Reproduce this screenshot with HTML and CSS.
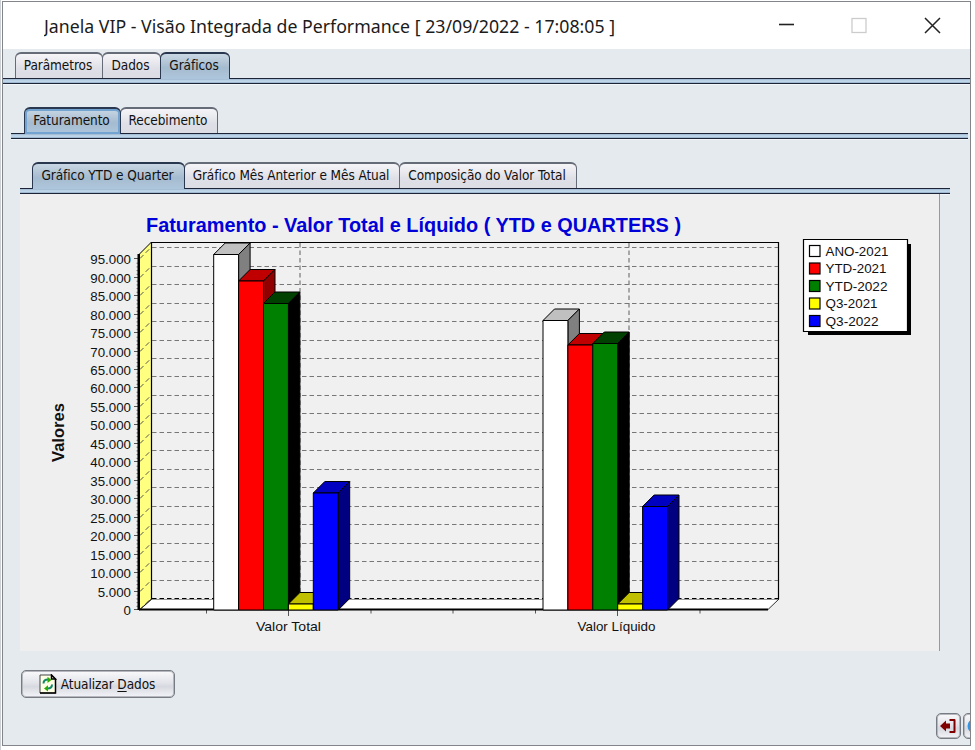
FILE: index.html
```html
<!DOCTYPE html>
<html lang="pt-BR">

<head>
    <meta charset="UTF-8">
    <meta name="viewport" content="width=device-width, initial-scale=1.0">
    <title>Janela VIP</title>
    <link rel="stylesheet" href="styles.css">
</head>

<body>
    <div class="window">
        <div class="titlebar">
            <svg class="title" width="590" height="45">
                <text x="0" y="30" textLength="571" lengthAdjust="spacingAndGlyphs">Janela VIP - Visão Integrada de Performance [ 23/09/2022 - 17:08:05 ]</text>
            </svg>
            <svg class="controls" width="170" height="45">
                <path d="M3 21.5h15" stroke="#222" stroke-width="1.6"/>
                <rect x="76" y="15.500" width="14" height="14" fill="none" stroke="#ccc" stroke-width="1.3"/>
                <path d="M149 15l15 15M164 15l-15 15" stroke="#222" stroke-width="1.5"/>
            </svg>
        </div>

        <div class="level level1">
            <div class="tabs">
                <div class="tab w88"><span>Parâmetros</span></div>
                <div class="tab w57"><span>Dados</span></div>
                <div class="tab w70 active"><span>Gráficos</span></div>
            </div>
            <div class="line"></div>
        </div>
        <div class="level level2">
            <div class="tabs">
                <div class="tab w97 active focus"><span>Faturamento</span></div>
                <div class="tab w98"><span>Recebimento</span></div>
            </div>
            <div class="line"></div>
        </div>
        <div class="level level3">
            <div class="tabs">
                <div class="tab w153 active"><span>Gráfico YTD e Quarter</span></div>
                <div class="tab w216"><span>Gráfico Mês Anterior e Mês Atual</span></div>
                <div class="tab w178"><span>Composição do Valor Total</span></div>
            </div>
            <div class="line"></div>
        </div>

        <div class="panel">
            <svg class="chart" width="919" height="457" viewBox="20 194 919 457">
                <text class="chart-title" x="146" y="231.500" textLength="535" lengthAdjust="spacingAndGlyphs">Faturamento - Valor Total e Líquido ( YTD e QUARTERS )</text>
                <text class="axis-title" transform="translate(64 462) rotate(-90)" textLength="59" lengthAdjust="spacingAndGlyphs">Valores</text>
                <!-- paredes -->
                <path d="M139.500 254L151.500 242V599L139.500 610Z" fill="#ffff80" stroke="#000"/>
                <path d="M140 609.500L152 599H779L768 609.500Z" fill="#fff" stroke="#000" stroke-width=".8"/>
                <path d="M151.500 599V242.500H778.500V599" fill="#f0f0f0" stroke="#000" stroke-width="1.2"/>
                <g id="grid"></g>
                <path d="M138.500 254V610" stroke="#000" stroke-width="2"/>
                <path d="M139 609.600H768" stroke="#000" stroke-width="2"/>
                <g id="bars"></g>
                <text x="256" y="631" textLength="65" lengthAdjust="spacingAndGlyphs">Valor Total</text>
                <text x="577.500" y="631" textLength="78" lengthAdjust="spacingAndGlyphs">Valor Líquido</text>
                <!-- legenda -->
                <path d="M808 244H911V335H808Z" fill="#000"/>
                <path d="M803.500 239.500H907.500V331.500H803.500Z" fill="#fff" stroke="#000" stroke-width="1.2"/>
                <g id="legend"></g>
            </svg>
        </div>

        <div class="footer">
            <button class="update">
                <svg width="18" height="20" viewBox="0 0 18 20">
                    <path d="M1 1H12.500L16.500 5V19H1Z" fill="#ffffe6" stroke="#444"/>
                    <path d="M16.500 5V19H1M12.500 1V5H16.500Z" fill="none" stroke="#000" stroke-width="1.500"/>
                    <path d="M4.500 9.500C4.500 6.500 6.500 5.500 9 5.500" fill="none" stroke="#128a6a" stroke-width="2"/>
                    <path d="M8.500 2.800L12.500 6L8.500 9Z" fill="#2faa00"/>
                    <path d="M13 10.500C13 13.500 11 14.500 8.500 14.500" fill="none" stroke="#128a6a" stroke-width="2"/>
                    <path d="M9 11.200L5 14.400L9 17.500Z" fill="#2faa00"/>
                </svg>
                <span>Atualizar <u>D</u>ados</span>
            </button>
        </div>
        <div class="exit-row">
            <button class="small">
                <svg width="17" height="16" viewBox="0 0 17 16">
                    <path d="M0 8L6 2.500V5.500H10V10.500H6V13.500Z" fill="#800000"/>
                    <path d="M9.500 2H14.500V14H9.500" fill="none" stroke="#800000" stroke-width="2" stroke-linejoin="round"/>
                </svg>
            </button>
            <button class="small cut">
                <svg width="16" height="16"><circle cx="8" cy="8" r="7.500" fill="#2f96ea"/></svg>
            </button>
        </div>
    </div>
    <script src="chart.js"></script>
</body>

</html>
```
FILE: styles.css
```css
* {
    box-sizing: border-box;
}

body {
    margin: 0;
    padding: 1px 0 0 1px;
    background-color: #fff;
    font-family: "DejaVu Sans Condensed", "DejaVu Sans", sans-serif;
    border-left: 1px solid #cdd0d4;
    height: 750px;
    overflow: hidden;
}

.window {
    width: 969px;
    height: 745px;
    border: 1px solid #82868a;
    background-color: #e5eaee;
    overflow: hidden;
    display: flex;
    flex-direction: column;
}

.titlebar {
    height: 47px;
    background-color: #fff;
    flex: none;
    display: flex;
    justify-content: space-between;
    padding: 1px 24px 0 41px;
}

.title text {
    font-family: "Noto Sans", "Open Sans", sans-serif;
    font-size: 18px;
    fill: #1b1b1b;
}

.level {
    flex: none;
    height: 34px;
}

.level1 {
    margin-top: 3px;
}

.level2 {
    margin: 21px 2px 0 8px;
}

.level3 {
    margin: 21px 20px 0 17px;
}

.tabs {
    display: flex;
    height: 26px;
    padding-left: 12px;
}

.tab {
    height: 26px;
    border: 1px solid #666b78;
    border-top-width: 2px;
    border-bottom: none;
    border-radius: 6px 6px 0 0;
    margin-right: -1px;
    background: linear-gradient(#f5f5f8, #dfe0e7 60%, #dcdde4);
    display: flex;
    align-items: center;
    justify-content: center;
    font-size: 13.5px;
    letter-spacing: -0.08px;
    white-space: nowrap;
    color: #111;
}

.tab span {
    margin: -2px 2px 0 0;
}

.active {
    position: relative;
    height: 27px;
    border-color: #29384f;
    background: linear-gradient(#c9d7e3, #a5bbcf 55%, #aec6dc);
}

.active span {
    margin-top: -3px;
}

.focus {
    box-shadow: inset 0 0 0 2px #73a4d1;
}

.w88 { width: 88px; }
.w57 { width: 59px; }
.w70 { width: 70px; }
.w97 { width: 97px; }
.w98 { width: 98px; }
.w153 { width: 153px; }
.w216 { width: 216px; }
.w178 { width: 178px; }

.line {
    height: 6px;
    background: linear-gradient(#1e2438 1px, #9db6d0 1px, #c4dbed 3px, #b8d0e5 4px, #8ba4bd 5px, #1e2438 5px);
    box-shadow: 0 1px 0 #f4f7fa;
}

.level2 .tabs {
    padding-left: 13px;
}

.panel {
    flex: none;
    width: 920px;
    height: 457px;
    margin: -2px 0 0 17px;
    background-color: #efefef;
    border-right: 1px solid #999;
}

.chart {
    display: block;
}

.chart text {
    font-family: "Liberation Sans", Arial, sans-serif;
    font-size: 13.3px;
    fill: #111;
}

.chart .chart-title {
    font-size: 20px;
    font-weight: bold;
    fill: #0000d8;
}

.chart .axis-title {
    font-size: 16px;
    font-weight: bold;
}

.footer {
    flex: none;
    padding: 19px 0 0 18px;
}

button {
    border: 1px solid #777b83;
    border-radius: 5px;
    background: linear-gradient(#fafafc, #e3e4ea 45%, #d7d9e0 60%, #f3f4f8);
    box-shadow: inset 0 0 0 1px #b5b7bd;
    display: flex;
    align-items: center;
    justify-content: center;
    padding: 0;
}

.update {
    width: 154px;
    height: 28px;
    gap: 4px;
    padding-right: 2px;
    font-family: "DejaVu Sans Condensed", "DejaVu Sans", sans-serif;
    font-size: 13.5px;
    letter-spacing: -0.08px;
    color: #111;
}

.update u {
    text-underline-offset: 2px;
}

.exit-row {
    display: flex;
    flex: none;
    gap: 2px;
    margin: 15px 0 0 933px;
}

.small {
    width: 25px;
    height: 26px;
    flex: none;
}

.cut {
    justify-content: flex-start;
    padding-left: 3px;
}
```
FILE: chart.js
```js
var NS = "http://www.w3.org/2000/svg";
var grid = document.querySelector("#grid");
var bars = document.querySelector("#bars");
var legend = document.querySelector("#legend");

function add(parent, tag, attrs, text) {
    var el = document.createElementNS(NS, tag);
    for (var k in attrs) {
        el.setAttribute(k, attrs[k]);
    }
    if (text) {
        el.textContent = text;
    }
    parent.appendChild(el);
}

// eixo Y
var step = 18.46;
for (var i = 0; i <= 19; i++) {
    var y = Math.round(610 - i * step);
    var label = i == 0 ? "0" : i * 5 + ".000";
    add(grid, "text", { x: 131, y: y + 4.5, "text-anchor": "end" }, label);
    add(grid, "path", { d: "M134 " + (y - 0.5) + "H138", stroke: "#555" });
    add(grid, "path", { d: "M140 " + (y - 0.5) + "L151 " + (y - 11.5), stroke: "#555", "stroke-dasharray": "5 3" });
    add(grid, "path", { d: "M152 " + (y - 11.5) + "H778", stroke: i == 0 ? "#000" : "#777", "stroke-width": 1.2, "stroke-dasharray": "4.5 3" });
    for (var j = 1; j < 5 && i < 19; j++) {
        add(grid, "path", { d: "M136.500 " + (y - j * step / 5) + "h2", stroke: "#555", "stroke-width": 0.8 });
    }
}

// eixo X
[300, 629].forEach(function (x) {
    add(grid, "path", { d: "M" + x + " 243V599", stroke: "#777", "stroke-width": 1.2, "stroke-dasharray": "4.5 3" });
});
[206.5, 288.5, 371, 453, 535.5, 617.5, 700].forEach(function (x, i) {
    add(grid, "path", { d: "M" + x + " 610v" + (i == 1 || i == 5 ? 6 : 3.5), stroke: "#555" });
});

// frente, topo, lado
var series = [
    { name: "ANO-2021", c: ["#fff", "#c0c0c0", "#808080"], w: 63 },
    { name: "YTD-2021", c: ["#f00", "#c00000", "#900000"], w: 61 },
    { name: "YTD-2022", c: ["#008000", "#004000", "#000"], w: 62 },
    { name: "Q3-2021", c: ["#ff0", "#c0c000", "#808000"], w: 52 },
    { name: "Q3-2022", c: ["#00f", "#0000c0", "#000080"], w: 53 }
];
var groups = [
    { x: 213.7, tops: [254.5, 281, 303.5, 604, 493] },
    { x: 543, tops: [320.5, 345, 343.5, 604, 506.5] }
];
groups.forEach(function (g) {
    g.tops.forEach(function (top, i) {
        var x = g.x + i * 24.9;
        var r = x + 24.9;
        var c = series[i].c;
        add(bars, "path", { d: "M" + x + " " + top + "l11.500 -11.500H" + (r + 11.5) + "L" + r + " " + top + "Z", fill: c[1], stroke: "#000" });
        add(bars, "path", { d: "M" + r + " " + top + "l11.500 -11.500V598.500L" + r + " 610Z", fill: c[2], stroke: "#000" });
        add(bars, "path", { d: "M" + x + " " + top + "H" + r + "V610H" + x + "Z", fill: c[0], stroke: "#000" });
    });
});

series.forEach(function (s, i) {
    var y = 245.5 + i * 17.5;
    add(legend, "rect", { x: 809.5, y: y, width: 10.5, height: 11, fill: s.c[0], stroke: "#000", "stroke-width": 1.2 });
    add(legend, "text", { x: 825.5, y: y + 10, textLength: s.w, lengthAdjust: "spacingAndGlyphs" }, s.name);
});
```
